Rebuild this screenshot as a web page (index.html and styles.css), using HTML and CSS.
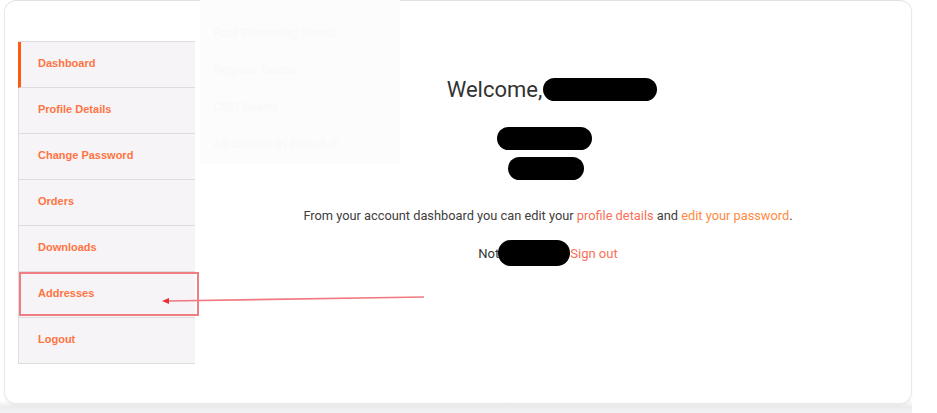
FILE: index.html
```html
<!DOCTYPE html>
<html lang="en">
<head>
    <meta charset="UTF-8">
    <meta name="viewport" content="width=device-width, initial-scale=1.0">
    <title>My Account</title>
    <link rel="stylesheet" href="styles.css">
</head>
<body>
    <div class="page">
        <div class="card">
            <ul class="account-nav">
                <li class="active"><a href="#">Dashboard</a></li>
                <li><a href="#">Profile Details</a></li>
                <li><a href="#">Change Password</a></li>
                <li><a href="#">Orders</a></li>
                <li><a href="#">Downloads</a></li>
                <li><a href="#">Addresses</a></li>
                <li><a href="#">Logout</a></li>
            </ul>

            <div class="account-content">
                <div class="welcome">Welcome,<span class="redact redact-name"></span></div>
                <span class="redact redact-a"></span>
                <span class="redact redact-b"></span>
                <p class="intro">From your account dashboard you can edit your <a href="#" class="link-pink">profile details</a> and <a href="#" class="link-orange">edit your password</a>.</p>
                <div class="not-you">Not<span class="redact redact-user"></span><a href="#" class="link-pink">Sign out</a></div>
            </div>

            <ul class="mega-menu">
                <li>Fast Flowering Seeds</li>
                <li>Regular Seeds</li>
                <li>CBD Seeds</li>
                <li>All Strains in Bulk A-Z</li>
            </ul>

            <div class="callout-box"></div>
            <svg class="callout-arrow" width="280" height="14" viewBox="0 0 280 14">
                <line x1="8" y1="8" x2="265" y2="4" stroke="#f07a80" stroke-width="1.6"/>
                <polygon points="3,8 10,5 10,11" fill="#e8303a"/>
            </svg>
        </div>
    </div>
</body>
</html>
```

FILE: styles.css
```css
body {
    margin: 0;
    background-color: #fff;
    font-family: Roboto, "Liberation Sans", Arial, sans-serif;
}
.page {
    width: 912px;
    height: 413px;
    background: linear-gradient(to bottom, #fff 0, #fff 400px, #ececee 407px, #f1f1f3 413px);
}
.card {
    position: relative;
    margin-left: 4px;
    width: 908px;
    height: 404px;
    padding: 40px 0 0 13px;
    box-sizing: border-box;
    display: flex;
    background-color: #fff;
    border: 1px solid #e8e8ea;
    border-top-color: #e2e2e4;
    border-radius: 12px;
    box-shadow: 0 2px 3px rgba(0, 0, 0, 0.04);
}

/* sidebar */
.account-nav {
    list-style: none;
    margin: 0;
    padding: 0;
    width: 176px;
    flex-shrink: 0;
    align-self: flex-start;
    background-color: #f6f4f7;
    border-top: 1px solid #dddcdf;
    border-left: 1px solid #dddcdf;
}
.account-nav li {
    height: 46px;
    box-sizing: border-box;
    padding: 0 0 3px 19px;
    border-bottom: 1px solid #dddcdf;
    display: flex;
    align-items: center;
}
.account-nav li.active {
    border-left: 3px solid #ff5a14;
    margin-left: -1px;
    padding-left: 17px;
}
.account-nav a {
    font-family: "Liberation Sans", Arial, sans-serif;
    font-size: 11px;
    font-weight: bold;
    color: #ff7443;
    text-decoration: none;
}

/* main */
.account-content {
    flex: 1;
    display: flex;
    flex-direction: column;
    align-items: center;
    padding-right: 10px;
}
.welcome {
    margin: 33px 0 0 8px;
    height: 30px;
    display: flex;
    align-items: center;
    font-size: 22px;
    color: #333;
}
.redact {
    display: block;
    background-color: #000;
    border-radius: 12px;
}
.redact-name {
    width: 114px;
    height: 23px;
    margin-left: 1px;
}
.redact-a {
    width: 95px;
    height: 23px;
    margin: 23px 8px 0 0;
}
.redact-b {
    width: 76px;
    height: 23px;
    margin: 7px 5px 0 0;
}
.intro {
    margin: 26px 0 0;
    font-size: 12.8px;
    line-height: 20px;
    color: #404040;
}
.link-pink {
    color: #f8705a;
    text-decoration: none;
}
.link-orange {
    color: #ff8a42;
    text-decoration: none;
}
.not-you {
    margin-top: 14px;
    height: 26px;
    display: flex;
    align-items: center;
    font-size: 13px;
    color: #333;
}
.redact-user {
    width: 72px;
    height: 26px;
    border-radius: 13px;
    margin: 0 0 0 -1px;
}

/* faded dropdown over the page */
.mega-menu {
    position: absolute;
    left: 195px;
    top: -1px;
    width: 200px;
    height: 164px;
    margin: 0;
    padding: 0;
    list-style: none;
    background-color: #fcfcfd;
}
.mega-menu li {
    height: 37px;
    line-height: 37px;
    padding-left: 13px;
    font-family: "Liberation Sans", Arial, sans-serif;
    font-size: 12px;
    font-weight: bold;
    color: #f9f9fa;
}
.mega-menu li:first-child {
    margin-top: 15px;
}

/* annotation */
.callout-box {
    position: absolute;
    left: 14px;
    top: 271px;
    width: 176px;
    height: 40px;
    border: 2px solid #ef7e84;
}
.callout-arrow {
    position: absolute;
    left: 154px;
    top: 292px;
}
```
